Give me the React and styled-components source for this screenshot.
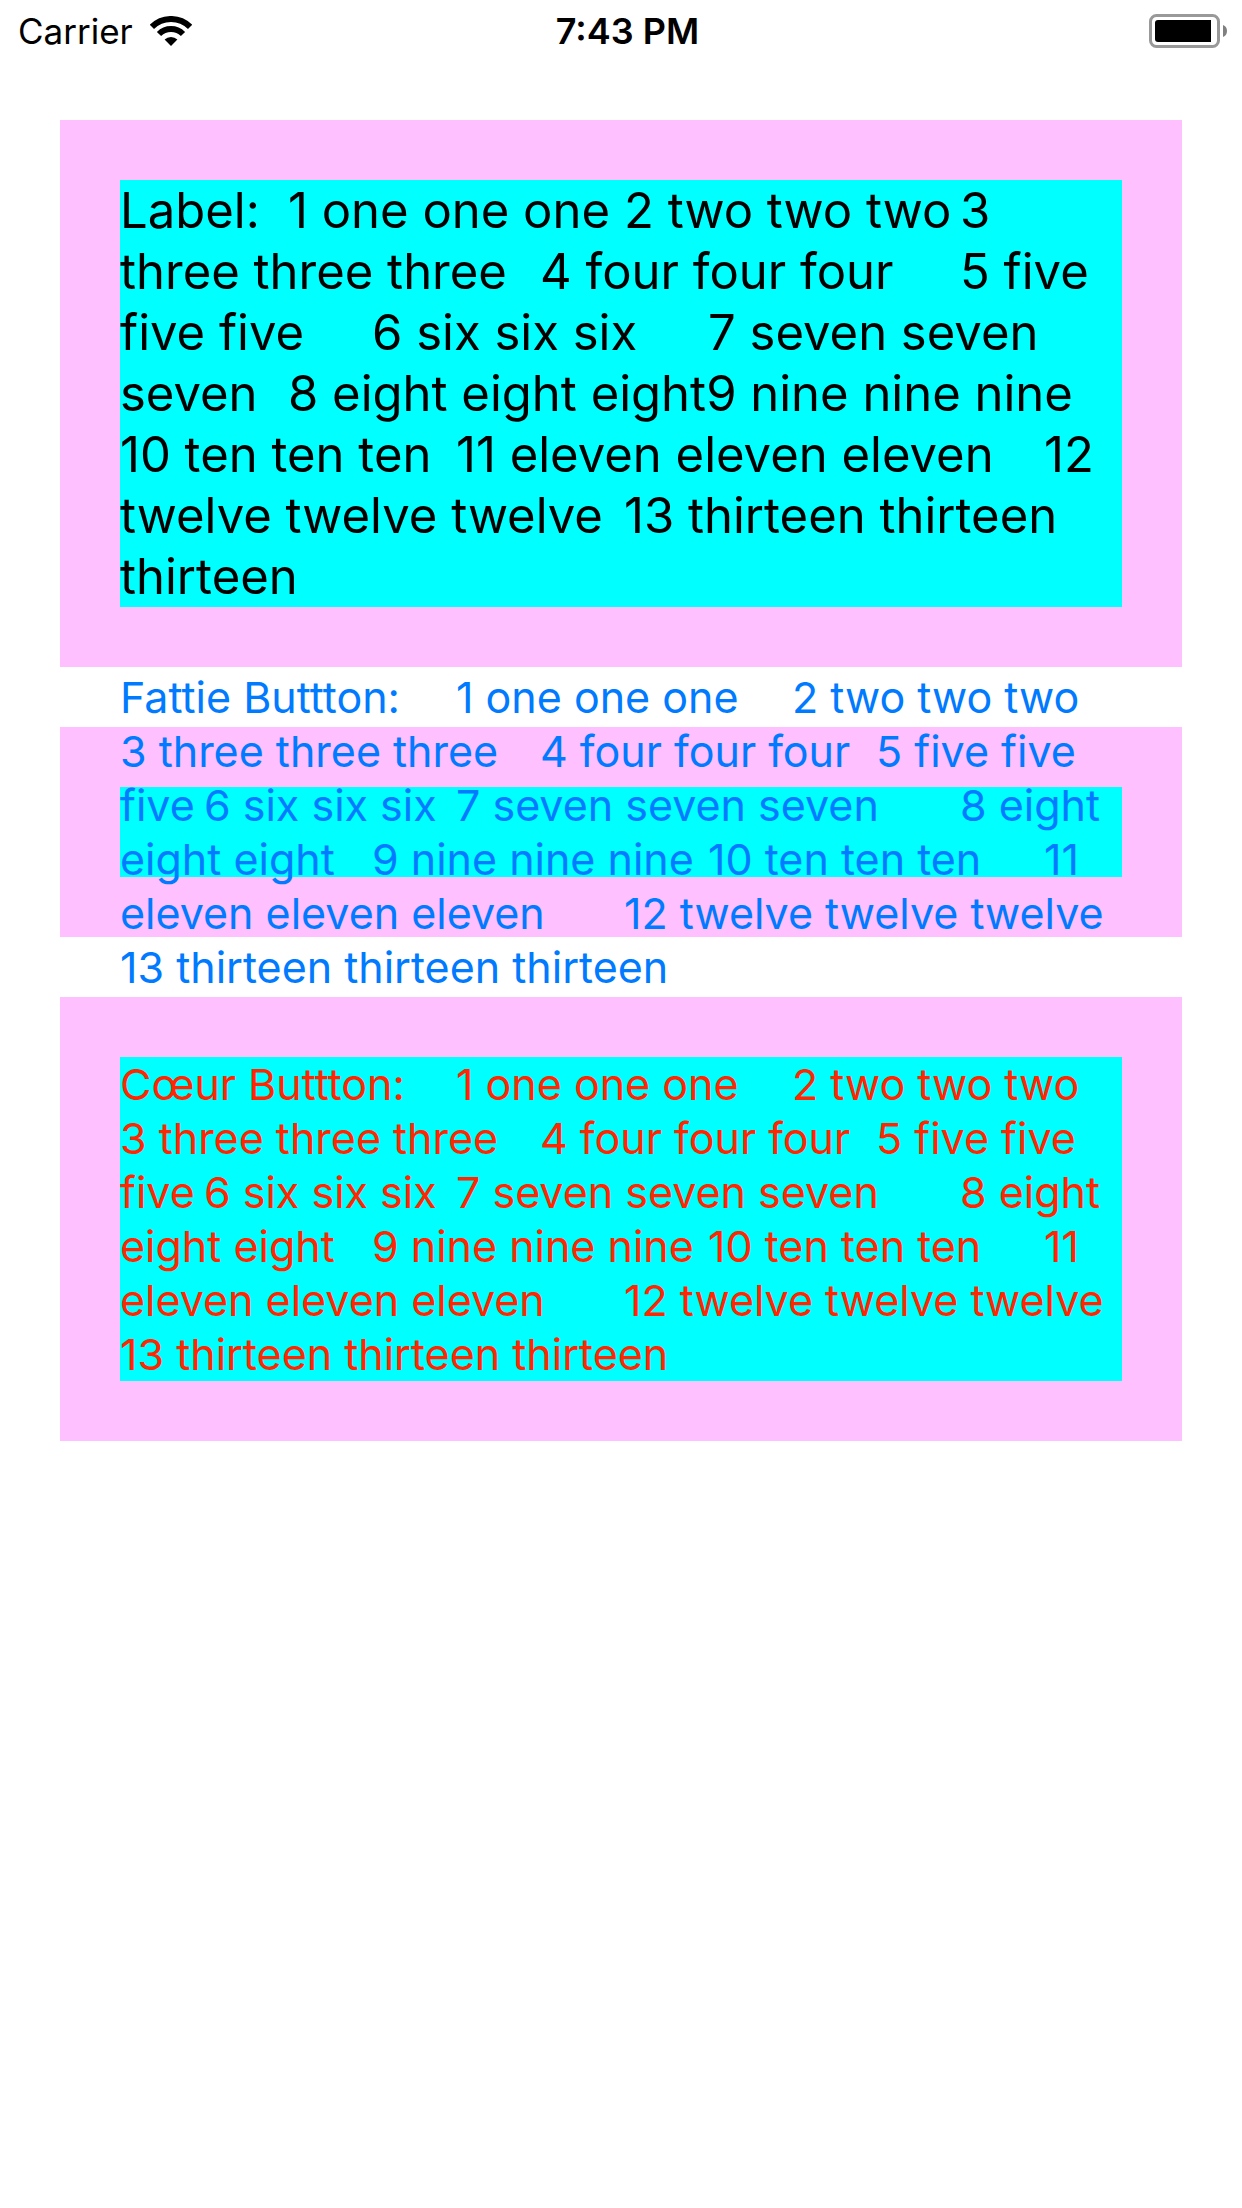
import React from 'react';
import styled, { createGlobalStyle } from 'styled-components';

const GlobalStyle = createGlobalStyle`
  body {
    margin: 0;
    background: #ffffff;
    color: #000000;
    font-family: Inter, Roboto, "Liberation Sans", sans-serif;
  }
`;

const StatusBar = styled.header`
  display: grid;
  grid-template-columns: 1fr auto 1fr;
  align-items: center;
  height: 60px;
  padding: 0 15px 0 18px;
  font-size: 35px;
  line-height: 62px;
`;

const Network = styled.div`
  display: flex;
  align-items: center;
  gap: 17px;
`;

const Clock = styled.time`
  padding-left: 10px;
  font-size: 36px;
  font-weight: 600;
`;

const Battery = styled.svg`
  justify-self: end;
`;

const Stack = styled.main`
  display: flex;
  flex-direction: column;
  gap: 60px;
  padding: 60px;
`;

const Frame = styled.section`
  padding: 60px;
  background: #ffc0ff;
`;

const Label = styled.p`
  margin: 0;
  background: #00ffff;
  font-size: 49px;
  line-height: 61px;
  white-space: pre-wrap;
  tab-size: 84px;
`;

const TextButton = styled.button`
  display: flex;
  align-items: center;
  width: 100%;
  height: ${(p) => p.$height || 'auto'};
  margin: 0;
  padding: 0;
  border: 0;
  background: #00ffff;
  color: ${(p) => p.$color};
  font: inherit;
  font-size: 43px;
  line-height: 54px;
  text-align: left;
  white-space: pre-wrap;
  tab-size: 84px;
`;

const labelText =
  'Label:\t1 one one one\t2 two two two\t3\nthree three three\t4 four four four\t5 five\nfive five\t6 six six six\t7 seven seven\nseven\t8 eight eight eight9 nine nine nine\n10 ten ten ten\t11 eleven eleven eleven\t12\ntwelve twelve twelve\t13 thirteen thirteen\nthirteen';

const buttonText =
  '\t1 one one one\t2 two two two\n3 three three three\t4 four four four\t5 five five\nfive\t6 six six six\t7 seven seven seven\t8 eight\neight eight\t9 nine nine nine\t10 ten ten ten\t11\neleven eleven eleven\t12 twelve twelve twelve\n13 thirteen thirteen thirteen';

export default function App() {
  return (
    <>
      <GlobalStyle />
      <StatusBar>
        <Network>
          <span>Carrier</span>
          <svg width="42" height="30" viewBox="0 0 42 30" aria-hidden="true">
            <path d="M1.9 10.9A27 27 0 0 1 40.1 10.9" fill="none" stroke="#000" strokeWidth="6" />
            <path d="M9 18A17 17 0 0 1 33 18" fill="none" stroke="#000" strokeWidth="6" />
            <path d="M21 30L14.6 23.6A9 9 0 0 1 27.4 23.6Z" />
          </svg>
        </Network>
        <Clock>7:43 PM</Clock>
        <Battery width="78" height="34" viewBox="0 0 78 34" aria-hidden="true">
          <rect x="1.5" y="1.5" width="68" height="31" rx="6" fill="none" stroke="#999" strokeWidth="3" />
          <path d="M9 6H62V28H9A3 3 0 0 1 6 25V9A3 3 0 0 1 9 6Z" />
          <path d="M74 11A6.5 6.5 0 0 1 74 23Z" fill="#808080" />
        </Battery>
      </StatusBar>
      <Stack>
        <Frame>
          <Label>{labelText}</Label>
        </Frame>
        <Frame>
          <TextButton type="button" $color="#007aff" $height="90px">
            {'Fattie Buttton:' + buttonText}
          </TextButton>
        </Frame>
        <Frame>
          <TextButton type="button" $color="#ff2600">
            {'Cœur Buttton:' + buttonText}
          </TextButton>
        </Frame>
      </Stack>
    </>
  );
}
